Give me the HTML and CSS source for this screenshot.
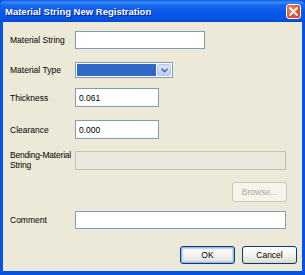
FILE: index.html
```
<!DOCTYPE html>
<html lang="en">
<head>
    <meta charset="UTF-8">
    <title>Material String New Registration</title>
    <link rel="stylesheet" href="styles.css">
</head>
<body>

    <div class="window">
        <div class="titlebar">
            <span class="title">Material String New Registration</span>
            <span class="close-btn">
                <svg width="9" height="9" viewBox="0 0 9 9">
                    <path d="M1 1 L8 8 M8 1 L1 8" stroke="#fff" stroke-width="1.8" stroke-linecap="round"/>
                </svg>
            </span>
        </div>

        <div class="dialog-body">
            <div class="row row-string">
                <label class="field-label">Material String</label>
                <input type="text" class="field-input wide-short">
            </div>

            <div class="row row-type">
                <label class="field-label">Material Type</label>
                <div class="combo">
                    <div class="combo-value"></div>
                    <div class="combo-arrow">
                        <svg width="7" height="5" viewBox="0 0 7 5">
                            <path d="M0.5 0.8 L3.5 3.8 L6.5 0.8" fill="none" stroke="#4d6185" stroke-width="1.5"/>
                        </svg>
                    </div>
                </div>
            </div>

            <div class="row row-thick">
                <label class="field-label">Thickness</label>
                <input type="text" class="field-input num" value="0.061">
            </div>

            <div class="row row-clear">
                <label class="field-label">Clearance</label>
                <input type="text" class="field-input num" value="0.000">
            </div>

            <div class="row row-bend">
                <label class="field-label two-line">Bending&#8209;Material<br>String</label>
                <input type="text" class="field-input full" disabled>
            </div>

            <div class="row row-browse">
                <button class="xp-btn browse" disabled>Browse...</button>
            </div>

            <div class="row row-comment">
                <label class="field-label">Comment</label>
                <input type="text" class="field-input full">
            </div>

            <div class="row row-actions">
                <button class="xp-btn ok">OK</button>
                <button class="xp-btn">Cancel</button>
            </div>
        </div>
    </div>

</body>
</html>
```

FILE: styles.css
```
* {
    margin: 0;
    padding: 0;
    box-sizing: border-box;
}

body {
    width: 305px;
    height: 275px;
    overflow: hidden;
    font-family: 'Liberation Sans', Arial, sans-serif;
    font-size: 8.5px;
    color: #000;
    background: #ece9d8;
}

.window {
    width: 305px;
    height: 275px;
    display: flex;
    flex-direction: column;
    background: #0553e2;
    padding: 0 3px 4px 3px;
}

.titlebar {
    height: 22px;
    margin: 0 -3px;
    padding: 0 4px 0 5px;
    display: flex;
    align-items: center;
    justify-content: space-between;
    background: linear-gradient(to bottom, #0a5ae6 0%, #3b8cf5 10%, #1667ec 25%, #0858e6 55%, #0553e2 85%, #0548d0 100%);
    border-radius: 6px 6px 0 0;
}

.title {
    color: #fff;
    font-weight: bold;
    font-size: 9.5px;
    text-shadow: 1px 1px 0 #0a1e8c;
}

.close-btn {
    width: 15px;
    height: 15px;
    display: flex;
    align-items: center;
    justify-content: center;
    background: radial-gradient(circle at 35% 35%, #f08a6a, #e0512e 60%, #c8401e);
    border: 1px solid #fff;
    border-radius: 3px;
    margin-top: 1px;
}

.dialog-body {
    flex: 1;
    background: #ece9d8;
    padding: 0 0 0 7px;
    display: flex;
    flex-direction: column;
}

.row {
    display: flex;
    align-items: center;
}

.field-label {
    width: 65px;
    flex-shrink: 0;
}

.two-line {
    line-height: 10px;
    white-space: nowrap;
    letter-spacing: -0.2px;
}

.field-input {
    height: 18px;
    border: 1px solid #7f9db9;
    background: #fff;
    font-family: inherit;
    font-size: 8.5px;
    padding: 0 3px;
    outline: none;
}

.field-input:disabled {
    background: #ebe9dd;
    border-color: #c3c3b5;
}

.wide-short {
    width: 130px;
}

.num {
    width: 84px;
    height: 19px;
}

.full {
    width: 211px;
}

.row-string { margin-top: 9px; }
.row-type { margin-top: 13px; }
.row-thick { margin-top: 10px; }
.row-clear { margin-top: 13px; }
.row-bend { margin-top: 11px; }
.row-bend .field-input { height: 19px; }
.row-browse { margin-top: 12px; justify-content: flex-end; padding-right: 15px; }
.row-comment { margin-top: 9px; }
.row-actions { margin-top: 17px; justify-content: flex-end; gap: 7px; padding-right: 5px; }

.combo {
    width: 98px;
    height: 16px;
    border: 1px solid #7f9db9;
    background: #fff;
    display: flex;
    padding: 1px;
}

.combo-value {
    flex: 1;
    background: #316ac5;
}

.combo-arrow {
    width: 14px;
    margin-left: 1px;
    background: linear-gradient(to bottom, #dbe6fd, #b9cdf7);
    border: 1px solid #b3c6f0;
    border-radius: 2px;
    display: flex;
    align-items: center;
    justify-content: center;
}

.xp-btn {
    width: 55px;
    height: 18px;
    font-family: inherit;
    font-size: 8.5px;
    color: #000;
    border: 1px solid #003c74;
    border-radius: 3px;
    background: linear-gradient(to bottom, #ffffff 0%, #f4f3ee 50%, #e3e1d6 90%, #d6d0c5 100%);
}

.xp-btn.ok {
    box-shadow: inset 0 0 0 1px #97b8f0, inset 0 0 0 2px #c4d6f8;
}

.xp-btn.browse {
    height: 20px;
    width: 55px;
    color: #aca899;
    border-color: #c9c7ba;
    background: #f5f4ea;
}
```
